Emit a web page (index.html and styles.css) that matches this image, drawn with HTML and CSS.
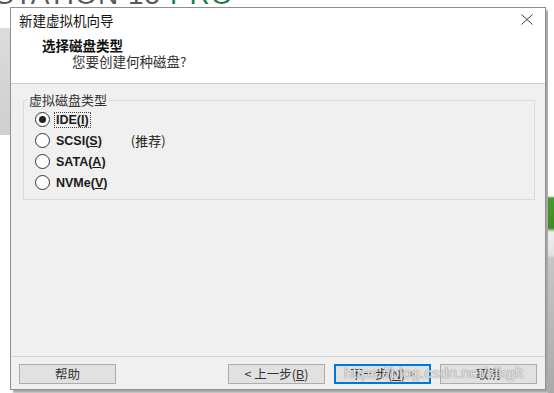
FILE: index.html
```html
<!DOCTYPE html>
<html lang="zh-CN">
<head>
    <meta charset="utf-8">
    <title>新建虚拟机向导</title>
    <link rel="stylesheet" href="styles.css">
</head>
<body>
    <div class="desk">
        <div class="brand"><span class="brand-gray">STATION 15 </span><span class="brand-green">PRO</span></div>
        <div class="strip-left"></div>
        <div class="strip-right"></div>

        <div class="dialog">
            <div class="top">
                <div class="titlebar">
                    <span class="title">新建虚拟机向导</span>
                    <svg class="close" width="12" height="11" viewBox="0 0 12 11">
                        <path d="M0.5 0.5 L11.5 10.5 M11.5 0.5 L0.5 10.5" stroke="#3c3c3c" stroke-width="1" fill="none"/>
                    </svg>
                </div>
                <div class="header">
                    <div class="heading">选择磁盘类型</div>
                    <div class="sub">您要创建何种磁盘?</div>
                </div>
            </div>

            <div class="body">
                <fieldset class="group">
                    <legend>虚拟磁盘类型</legend>
                    <div class="row">
                        <span class="radio checked"></span>
                        <span class="label focus">IDE(<u>I</u>)</span>
                    </div>
                    <div class="row">
                        <span class="radio"></span>
                        <span class="label">SCSI(<u>S</u>)</span>
                        <span class="hint">(推荐)</span>
                    </div>
                    <div class="row">
                        <span class="radio"></span>
                        <span class="label">SATA(<u>A</u>)</span>
                    </div>
                    <div class="row">
                        <span class="radio"></span>
                        <span class="label">NVMe(<u>V</u>)</span>
                    </div>
                </fieldset>
            </div>

            <div class="footer">
                <button class="btn">帮助</button>
                <div class="spacer"></div>
                <button class="btn">&lt; 上一步(<u>B</u>)</button>
                <button class="btn primary">下一步(<u>N</u>) &gt;</button>
                <button class="btn">取消</button>
            </div>
        </div>

        <div class="watermark">https://blog.csdn.net/slkgft</div>
    </div>
</body>
</html>
```

FILE: styles.css
```css
body {
    margin: 0;
    background-color: #ffffff;
    font-family: "Noto Sans CJK SC", "Liberation Sans", sans-serif;
}
.desk {
    position: relative;
    width: 554px;
    height: 393px;
    overflow: hidden;
    padding-top: 7px;
    box-sizing: border-box;
}
.brand {
    position: absolute;
    left: -5px;
    top: -19px;
    font-family: "Liberation Sans", sans-serif;
    font-size: 28px;
    line-height: 28px;
    letter-spacing: 1px;
    white-space: nowrap;
}
.brand-gray {
    color: #5a5a5a;
}
.brand-green {
    color: #1f7b3c;
}
.strip-left {
    position: absolute;
    left: 0;
    top: 28px;
    width: 10px;
    height: 107px;
    background: linear-gradient(#dcdcdc, #cfcfcf);
}
.strip-right {
    position: absolute;
    right: 0;
    top: 0;
    width: 6px;
    height: 393px;
    background: linear-gradient(#ffffff 0, #ffffff 196px, #4b9a2d 198px, #3f8a26 228px, #eeeeee 232px, #e2e2e2 255px, #c6c6c6 258px, #a9a9a9 393px);
}
.dialog {
    margin-left: 10px;
    width: 536px;
    height: 383px;
    box-sizing: border-box;
    border: 1px solid #8f8f8f;
    box-shadow: 3px 3px 2px rgba(0, 0, 0, 0.35);
    background-color: #f0f0f0;
    display: flex;
    flex-direction: column;
}
.top {
    background-color: #ffffff;
    border-bottom: 1px solid #cdcdcd;
}
.titlebar {
    height: 24px;
    display: flex;
    align-items: center;
    justify-content: space-between;
    padding: 0 12px 0 8px;
}
.title {
    font-size: 13.5px;
    color: #111;
}
.close {
    margin-top: -1px;
}
.header {
    padding: 5px 0 14px 0;
}
.heading {
    padding-left: 31px;
    font-size: 13.5px;
    line-height: 16px;
    font-weight: bold;
    color: #111;
}
.sub {
    padding-left: 61px;
    font-size: 13.5px;
    line-height: 16px;
    color: #333;
}
.body {
    flex: 1;
    padding: 8px 10px 0 12px;
}
.group {
    margin: 0;
    padding: 1px 0 6px 11px;
    border: 1px solid #dcdcdc;
}
.group legend {
    margin-left: -8px;
    padding: 0 2px;
    font-size: 13px;
    line-height: 16px;
    color: #333;
}
.row {
    height: 21px;
    display: flex;
    align-items: center;
}
.radio {
    width: 13px;
    height: 13px;
    border: 1px solid #333;
    border-radius: 50%;
    background-color: #fff;
    position: relative;
    flex-shrink: 0;
}
.radio.checked::after {
    content: "";
    position: absolute;
    left: 3px;
    top: 3px;
    width: 7px;
    height: 7px;
    border-radius: 50%;
    background-color: #222;
}
.label {
    margin-left: 4px;
    padding: 0 1px;
    border: 1px dotted transparent;
    font-family: "Liberation Sans", sans-serif;
    font-weight: bold;
    font-size: 12.5px;
    line-height: 14px;
    color: #1a1a1a;
}
.label.focus {
    border-color: #444;
}
.hint {
    margin-left: 27px;
    font-size: 13px;
    color: #222;
}
.footer {
    border-top: 1px solid #d6d6d6;
    padding: 7px 8px 5px 8px;
    display: flex;
    gap: 9px;
}
.spacer {
    flex: 1;
}
.btn {
    width: 97px;
    height: 20px;
    padding: 0;
    border: 1px solid #adadad;
    background-color: #e1e1e1;
    font-family: "Noto Sans CJK SC", "Liberation Sans", sans-serif;
    font-size: 12.5px;
    line-height: 16px;
    color: #333;
}
.btn u {
    font-family: "Liberation Sans", sans-serif;
}
.btn.primary {
    border: 1px solid #0078d7;
    box-shadow: inset 0 0 0 1px #0078d7;
}
.watermark {
    position: absolute;
    left: 344px;
    top: 364px;
    font-family: "Liberation Sans", sans-serif;
    font-size: 15.5px;
    color: rgba(255, 255, 255, 0.75);
    text-shadow: 0 0 1px #8a8a8a, 0 0 1px #8a8a8a;
    white-space: nowrap;
}
```
